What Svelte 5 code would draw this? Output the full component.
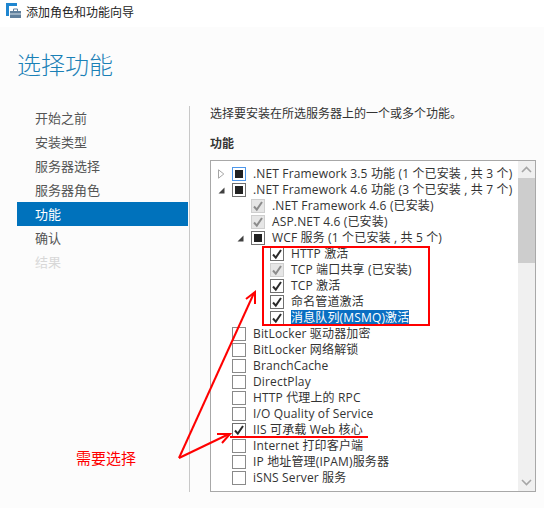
<script>
  const steps = [
    { label: '开始之前' }, { label: '安装类型' }, { label: '服务器选择' }, { label: '服务器角色' },
    { label: '功能', active: true }, { label: '确认' }, { label: '结果', disabled: true }
  ];
  const rows = [
    { level: 0, exp: 'closed', state: 'mixed', focus: true, text: '.NET Framework 3.5 功能 (1 个已安装 , 共 3 个)' },
    { level: 0, exp: 'open', state: 'mixed', text: '.NET Framework 4.6 功能 (3 个已安装 , 共 7 个)' },
    { level: 1, state: 'locked', text: '.NET Framework 4.6 (已安装)' },
    { level: 1, state: 'locked', text: 'ASP.NET 4.6 (已安装)' },
    { level: 1, exp: 'open', state: 'mixed', text: 'WCF 服务 (1 个已安装 , 共 5 个)' },
    { level: 2, state: 'on', text: 'HTTP 激活' },
    { level: 2, state: 'locked', text: 'TCP 端口共享 (已安装)' },
    { level: 2, state: 'on', text: 'TCP 激活' },
    { level: 2, state: 'on', text: '命名管道激活' },
    { level: 2, state: 'on', text: '消息队列(MSMQ)激活', selected: true },
    { level: 0, state: 'off', text: 'BitLocker 驱动器加密' },
    { level: 0, state: 'off', text: 'BitLocker 网络解锁' },
    { level: 0, state: 'off', text: 'BranchCache' },
    { level: 0, state: 'off', text: 'DirectPlay' },
    { level: 0, state: 'off', text: 'HTTP 代理上的 RPC' },
    { level: 0, state: 'off', text: 'I/O Quality of Service' },
    { level: 0, state: 'on', text: 'IIS 可承载 Web 核心' },
    { level: 0, state: 'off', text: 'Internet 打印客户端' },
    { level: 0, state: 'off', text: 'IP 地址管理(IPAM)服务器' },
    { level: 0, state: 'off', text: 'iSNS Server 服务' }
  ];
</script>

<div class="page">
  <header class="bar">
    <svg class="logo" width="16" height="16" viewBox="0 0 16 16">
      <rect x="0" y="0" width="11" height="3" fill="#1f86d0" />
      <rect x="0" y="3" width="3" height="10" fill="#1f86d0" />
      <path d="M4 8h11v7H4z" fill="#5f7f9c" />
      <path d="M4 10.5h11v1H4z" fill="#d7e2ea" />
      <path d="M7.5 8V6h4v2" fill="none" stroke="#5f7f9c" />
    </svg>
    <span>添加角色和功能向导</span>
  </header>

  <h1>选择功能</h1>

  <div class="main">
    <nav>
      {#each steps as s}
        <div class="step" class:active={s.active} class:disabled={s.disabled}>{s.label}</div>
      {/each}
    </nav>
    <section>
      <p class="intro">选择要安装在所选服务器上的一个或多个功能。</p>
      <h2>功能</h2>
      <div class="box">
        <div class="tree">
          {#each rows as r}
            <div class="row l{r.level}">
              <span class="exp">
                {#if r.exp === 'closed'}
                  <svg width="7" height="10" viewBox="0 0 7 10"><path d="M.5.8 5.8 5 .5 9.2z" fill="#fff" stroke="#a6a6a6" /></svg>
                {:else if r.exp === 'open'}
                  <svg width="7" height="7" viewBox="0 0 7 7"><path d="M6.5.5v6h-6z" fill="#404040" /></svg>
                {/if}
              </span>
              <span class="cb {r.state}" class:focus={r.focus}>
                {#if r.state === 'on' || r.state === 'locked'}
                  <svg width="12" height="12" viewBox="0 0 12 12"><path d="M2 6.5 4.8 9.6 10 2" fill="none" stroke="currentColor" stroke-width="2" /></svg>
                {/if}
              </span>
              <span class="label" class:selected={r.selected}>{r.text}</span>
            </div>
          {/each}
        </div>
        <div class="scroll">
          <div class="sbtn">
            <svg width="11" height="7" viewBox="0 0 11 7"><path d="M1 6 5.5 1.5 10 6" fill="none" stroke="#a6a6a6" stroke-width="1.6" /></svg>
          </div>
          <div class="thumb"></div>
          <div class="track"></div>
          <div class="sbtn">
            <svg width="11" height="7" viewBox="0 0 11 7"><path d="M1 1 5.5 5.5 10 1" fill="none" stroke="#a6a6a6" stroke-width="1.6" /></svg>
          </div>
        </div>
      </div>
    </section>
  </div>

  <svg class="marks" width="544" height="508" viewBox="0 0 544 508">
    <rect x="263" y="247" width="166" height="78" fill="none" stroke="#f00" stroke-width="2" />
    <path d="M179 458 254 293" fill="none" stroke="#f00" stroke-width="2" />
    <path d="M246 299 255 292 255 304" fill="none" stroke="#f00" stroke-width="2" />
    <path d="M179 458 229 434" fill="none" stroke="#f00" stroke-width="2" />
    <path d="M217 434 230 434 222 443" fill="none" stroke="#f00" stroke-width="2" />
    <path d="M230 437H368" fill="none" stroke="#f00" stroke-width="2" />
  </svg>
  <div class="note">需要选择</div>
</div>

<style>
  :global(body) { margin: 0; background: #fcfcfc; }
  .page {
    position: relative;
    width: 544px;
    height: 508px;
    overflow: hidden;
    font-family: "Open Sans", "Noto Sans CJK SC", sans-serif;
    font-size: 12px;
    color: #333;
  }
  .bar {
    height: 27px;
    box-sizing: border-box;
    padding: 0 0 5px 6px;
    background: #fff;
    display: flex;
    align-items: center;
    gap: 4px;
    color: #222;
    font-family: "Noto Sans CJK SC", sans-serif;
  }
  .logo { flex: none; }
  h1 {
    margin: 0;
    height: 79px;
    padding: 18px 0 0 17px;
    box-sizing: border-box;
    font-size: 24px;
    line-height: 38px;
    font-weight: 300;
    color: #1a80b6;
    font-family: "Noto Sans CJK SC", sans-serif;
  }
  .main { display: flex; height: 386px; }
  nav {
    width: 171px;
    margin: 0 1px 0 17px;
    font-size: 13px;
    color: #555;
    font-family: "Noto Sans CJK SC", sans-serif;
  }
  .step { height: 24px; line-height: 24px; padding-left: 18px; }
  .step.active { background: #0072bc; color: #fff; }
  .step.disabled { color: #d8d8d8; }
  section {
    flex: 1;
    border-left: 1px solid #c8c8c8;
    padding-left: 20px;
    display: flex;
    flex-direction: column;
  }
  .intro { margin: 0; height: 20px; line-height: 14px; font-family: "Noto Sans CJK SC", sans-serif; }
  h2 { margin: 0; height: 34px; padding-top: 8px; box-sizing: border-box; font-size: 12px; line-height: 18px; font-weight: 700; font-family: "Noto Sans CJK SC", sans-serif; }
  .box {
    width: 326px;
    height: 332px;
    box-sizing: border-box;
    border: 1px solid #a8a8a8;
    background: #fff;
    display: flex;
  }
  .tree { flex: 1; padding-top: 5px; min-width: 0; }
  .row {
    height: 16px;
    display: flex;
    align-items: center;
    white-space: nowrap;
    font-size: 12px;
    line-height: 16px;
    letter-spacing: 0.15px;
  }
  .l1 { padding-left: 19px; }
  .l2 { padding-left: 38px; }
  .exp { flex: none; width: 21px; padding-left: 7px; box-sizing: border-box; display: flex; align-items: center; }
  .cb {
    flex: none;
    width: 14px;
    height: 14px;
    box-sizing: border-box;
    border: 1px solid #707070;
    background: #fff;
    margin-right: 7px;
    display: flex;
    align-items: center;
    justify-content: center;
    color: #2a2a2a;
  }
  .cb.mixed::before { content: ""; width: 8px; height: 8px; background: #222; }
  .cb.focus { border-color: #4d97ea; }
  .cb.off { border-color: #8a8a8a; }
  .cb.locked { background: #e6e6e6; border-color: #cfcfcf; color: #8c8c8c; }
  .label.selected { background: #0a6fc2; color: #fff; }
  .scroll { flex: none; width: 17px; background: #f0f0f0; display: flex; flex-direction: column; }
  .sbtn { flex: none; height: 17px; display: flex; align-items: center; justify-content: center; }
  .thumb { flex: none; height: 85px; background: #cdcdcd; }
  .track { flex: 1; }
  .marks { position: absolute; left: 0; top: 0; pointer-events: none; }
  .note {
    position: absolute;
    left: 76px;
    top: 448px;
    font-size: 15px;
    line-height: 20px;
    color: #f00;
    font-family: "Noto Sans CJK SC", sans-serif;
  }
</style>
